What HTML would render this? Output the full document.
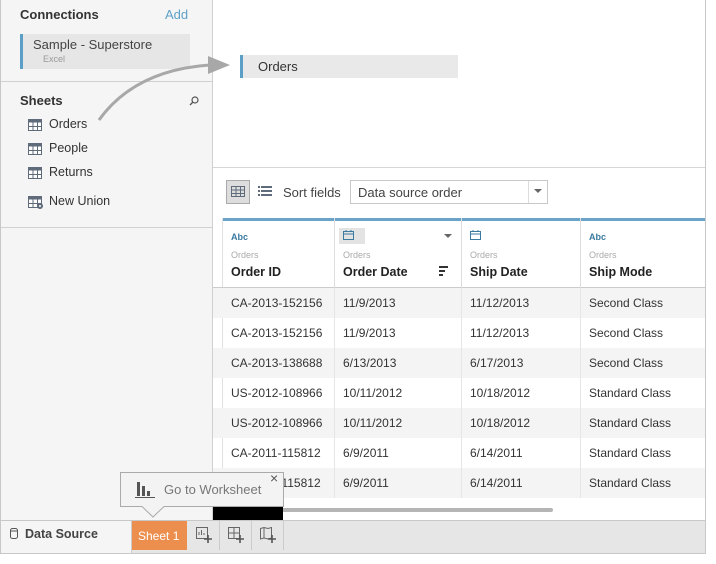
<!DOCTYPE html>
<html><head><meta charset="utf-8"><style>
*{box-sizing:border-box;margin:0;padding:0}
body{width:716px;height:564px;background:#fff;font-family:"Liberation Sans",sans-serif;position:relative;overflow:hidden;color:#333}
.a{position:absolute}
.frame{left:0;top:0;width:706px;height:554px;border:1px solid #c8c8c8;border-top:none}
.left{left:1px;top:0;width:212px;height:520px;background:#f5f5f5;border-right:1px solid #d0d0d0}
.t{font-size:12.5px;white-space:nowrap}
.row{left:213px;width:492px;height:30px;font-size:12px;color:#333}
.row span{position:absolute;top:8px}
.g{background:#f4f4f4}
.vl{width:1px;background:#e6e6e6}
</style></head><body>
<div class="a frame"></div>
<div class="a left"></div>
<div class="a t" style="left:20px;top:7px;font-weight:bold;font-size:13px;color:#333">Connections</div>
<div class="a t" style="left:165px;top:7px;font-size:13px;color:#5fa0c8">Add</div>
<div class="a" style="left:20px;top:34px;width:170px;height:35px;background:#e6e6e6;border-left:3px solid #5b9ec6"></div>
<div class="a t" style="left:33px;top:37px;font-size:13px;color:#444">Sample - Superstore</div>
<div class="a t" style="left:43px;top:54px;font-size:9px;color:#999">Excel</div>
<div class="a" style="left:1px;top:81px;width:211px;height:1px;background:#d0d0d0"></div>
<div class="a t" style="left:20px;top:93px;font-weight:bold;font-size:13px">Sheets</div>
<svg class="a" style="left:188px;top:95px" width="12" height="12"><circle cx="7" cy="5" r="3" fill="none" stroke="#555" stroke-width="1.2"/><line x1="5" y1="7" x2="2" y2="10" stroke="#555" stroke-width="1.3"/></svg>
<svg class="a" width="0" height="0"><defs><g id="tb"><rect x="0.5" y="0.5" width="13" height="11" fill="#fff" stroke="#5f6b7a"/><rect x="0.5" y="0.5" width="13" height="3" fill="#5f6b7a"/><line x1="5" y1="3" x2="5" y2="12" stroke="#5f6b7a"/><line x1="9.5" y1="3" x2="9.5" y2="12" stroke="#5f6b7a"/><line x1="0" y1="7.5" x2="14" y2="7.5" stroke="#5f6b7a"/></g></defs></svg>
<svg class="a" style="left:28px;top:119px" width="14" height="12"><use href="#tb"/></svg>
<svg class="a" style="left:28px;top:143px" width="14" height="12"><use href="#tb"/></svg>
<svg class="a" style="left:28px;top:167px" width="14" height="12"><use href="#tb"/></svg>
<svg class="a" style="left:28px;top:196px" width="16" height="14"><use href="#tb"/><circle cx="12" cy="10" r="3" fill="#5f6b7a"/><circle cx="12" cy="10" r="1" fill="#fff"/></svg>
<div class="a t" style="left:49px;top:117px;color:#333">Orders</div>
<div class="a t" style="left:49px;top:141px">People</div>
<div class="a t" style="left:49px;top:165px">Returns</div>
<div class="a t" style="left:49px;top:194px">New Union</div>
<div class="a" style="left:1px;top:227px;width:211px;height:1px;background:#d0d0d0"></div>
<svg class="a" style="left:95px;top:50px" width="140" height="75"><path d="M4 70 Q40 20 115 15" fill="none" stroke="#a8a8a8" stroke-width="3"/><path d="M113 6 L135 15 L113 24 Z" fill="#a8a8a8"/></svg>
<div class="a" style="left:240px;top:55px;width:218px;height:23px;background:#e9e9e9;border-left:3px solid #5b9ec6"></div>
<div class="a t" style="left:258px;top:59px;font-size:13px">Orders</div>
<div class="a" style="left:213px;top:167px;width:492px;height:1px;background:#d6d6d6"></div>
<div class="a" style="left:226px;top:180px;width:24px;height:24px;background:#ddd;border:1px solid #aaa"></div>
<svg class="a" style="left:231px;top:186px" width="14" height="12"><rect x="0.5" y="0.5" width="13" height="10" fill="none" stroke="#5f6b7a"/><line x1="5" y1="0" x2="5" y2="11" stroke="#5f6b7a"/><line x1="9.5" y1="0" x2="9.5" y2="11" stroke="#5f6b7a"/><line x1="0" y1="4" x2="14" y2="4" stroke="#5f6b7a"/><line x1="0" y1="7.5" x2="14" y2="7.5" stroke="#5f6b7a"/></svg>
<svg class="a" style="left:258px;top:186px" width="14" height="12"><g fill="#5f6b7a"><rect x="0" y="0" width="2" height="2"/><rect x="3" y="0" width="11" height="2"/><rect x="0" y="4" width="2" height="2"/><rect x="3" y="4" width="11" height="2"/><rect x="0" y="8" width="2" height="2"/><rect x="3" y="8" width="11" height="2"/></g></svg>
<div class="a t" style="left:283px;top:185px;font-size:13px;color:#444">Sort fields</div>
<div class="a" style="left:350px;top:180px;width:198px;height:24px;border:1px solid #c8c8c8;background:#fff"></div>
<div class="a" style="left:528px;top:181px;width:1px;height:22px;background:#ddd"></div>
<div class="a t" style="left:358px;top:185px;font-size:13px;color:#444">Data source order</div>
<svg class="a" style="left:534px;top:189px" width="9" height="5"><path d="M0 0H8L4 4Z" fill="#666"/></svg>
<!-- header -->
<div class="a" style="left:223px;top:218px;width:482px;height:3px;background:#6aa5c9"></div>
<div class="a" style="left:222px;top:218px;width:1px;height:280px;background:#e0e0e0"></div>
<div class="a" style="left:213px;top:287px;width:492px;height:1px;background:#ccc"></div>
<div class="a vl" style="left:334px;top:218px;height:70px;background:#ddd"></div>
<div class="a vl" style="left:461px;top:218px;height:70px;background:#ddd"></div>
<div class="a vl" style="left:580px;top:218px;height:70px;background:#ddd"></div>
<div class="a" style="left:339px;top:228px;width:26px;height:16px;background:#e3e3e3"></div>
<div class="a t" style="left:231px;top:232px;font-size:9px;font-weight:bold;color:#3a7aa0">Abc</div>
<div class="a t" style="left:589px;top:232px;font-size:9px;font-weight:bold;color:#3a7aa0">Abc</div>
<svg class="a" style="left:343px;top:230px" width="11" height="10"><rect x="0.5" y="1.5" width="10" height="8" fill="none" stroke="#3a7aa0"/><line x1="0" y1="4" x2="11" y2="4" stroke="#3a7aa0"/><line x1="3" y1="0" x2="3" y2="2" stroke="#3a7aa0"/><line x1="8" y1="0" x2="8" y2="2" stroke="#3a7aa0"/></svg>
<svg class="a" style="left:470px;top:230px" width="11" height="10"><rect x="0.5" y="1.5" width="10" height="8" fill="none" stroke="#3a7aa0"/><line x1="0" y1="4" x2="11" y2="4" stroke="#3a7aa0"/><line x1="3" y1="0" x2="3" y2="2" stroke="#3a7aa0"/><line x1="8" y1="0" x2="8" y2="2" stroke="#3a7aa0"/></svg>
<svg class="a" style="left:444px;top:234px" width="9" height="5"><path d="M0 0H8L4 4Z" fill="#666"/></svg>
<svg class="a" style="left:439px;top:266px" width="10" height="10"><g fill="#333"><rect x="0" y="0" width="9" height="2"/><rect x="0" y="4" width="6" height="2"/><rect x="0" y="8" width="4" height="2"/></g></svg>
<div class="a t" style="left:231px;top:250px;font-size:9px;color:#aaa">Orders</div>
<div class="a t" style="left:343px;top:250px;font-size:9px;color:#aaa">Orders</div>
<div class="a t" style="left:470px;top:250px;font-size:9px;color:#aaa">Orders</div>
<div class="a t" style="left:589px;top:250px;font-size:9px;color:#aaa">Orders</div>
<div class="a t" style="left:231px;top:265px;font-weight:bold;font-size:12.5px;color:#222">Order ID</div>
<div class="a t" style="left:343px;top:265px;font-weight:bold;font-size:12.5px;color:#222">Order Date</div>
<div class="a t" style="left:470px;top:265px;font-weight:bold;font-size:12.5px;color:#222">Ship Date</div>
<div class="a t" style="left:589px;top:265px;font-weight:bold;font-size:12.5px;color:#222">Ship Mode</div>
<!-- rows -->
<div class="a row g" style="top:288px"><span style="left:18px">CA-2013-152156</span><span style="left:130px">11/9/2013</span><span style="left:257px">11/12/2013</span><span style="left:376px">Second Class</span></div>
<div class="a row" style="top:318px"><span style="left:18px">CA-2013-152156</span><span style="left:130px">11/9/2013</span><span style="left:257px">11/12/2013</span><span style="left:376px">Second Class</span></div>
<div class="a row g" style="top:348px"><span style="left:18px">CA-2013-138688</span><span style="left:130px">6/13/2013</span><span style="left:257px">6/17/2013</span><span style="left:376px">Second Class</span></div>
<div class="a row" style="top:378px"><span style="left:18px">US-2012-108966</span><span style="left:130px">10/11/2012</span><span style="left:257px">10/18/2012</span><span style="left:376px">Standard Class</span></div>
<div class="a row g" style="top:408px"><span style="left:18px">US-2012-108966</span><span style="left:130px">10/11/2012</span><span style="left:257px">10/18/2012</span><span style="left:376px">Standard Class</span></div>
<div class="a row" style="top:438px"><span style="left:18px">CA-2011-115812</span><span style="left:130px">6/9/2011</span><span style="left:257px">6/14/2011</span><span style="left:376px">Standard Class</span></div>
<div class="a row g" style="top:468px"><span style="left:18px">CA-2011-115812</span><span style="left:130px">6/9/2011</span><span style="left:257px">6/14/2011</span><span style="left:376px">Standard Class</span></div>
<div class="a vl" style="left:334px;top:288px;height:210px"></div>
<div class="a vl" style="left:461px;top:288px;height:210px"></div>
<div class="a vl" style="left:580px;top:288px;height:210px"></div>
<div class="a" style="left:213px;top:498px;width:492px;height:22px;background:#fff"></div>
<div class="a" style="left:213px;top:508px;width:340px;height:4px;background:#b5b5b5;border-radius:2px"></div>
<div class="a" style="left:213px;top:500px;width:70px;height:20px;background:#000"></div>
<!-- tab bar -->
<div class="a" style="left:1px;top:520px;width:704px;height:33px;background:#e6e6e6;border-top:1px solid #c8c8c8"></div>
<div class="a" style="left:1px;top:521px;width:131px;height:32px;background:#f5f5f5;border-right:1px solid #ccc"></div>
<svg class="a" style="left:10px;top:528px" width="9" height="12"><rect x="0.5" y="0.5" width="7" height="10" rx="2" fill="none" stroke="#555"/><line x1="0" y1="3" x2="8" y2="3" stroke="#555"/></svg>
<div class="a t" style="left:25px;top:527px;font-weight:bold;font-size:12.5px;color:#444">Data Source</div>
<div class="a" style="left:132px;top:521px;width:55px;height:29px;background:#ec8f4e"></div>
<div class="a t" style="left:138px;top:529px;font-size:12px;color:#fff">Sheet 1</div>
<div class="a" style="left:219px;top:521px;width:1px;height:29px;background:#ccc"></div>
<div class="a" style="left:251px;top:521px;width:1px;height:29px;background:#ccc"></div>
<div class="a" style="left:283px;top:521px;width:1px;height:29px;background:#ccc"></div>
<svg class="a" style="left:196px;top:527px" width="16" height="16"><rect x="0.5" y="0.5" width="11" height="11" fill="none" stroke="#666"/><path d="M3 8V5M5.5 8V3M8 8V6" stroke="#666"/><path d="M12 8V16M8 12H16" stroke="#555" stroke-width="1.6"/></svg>
<svg class="a" style="left:228px;top:527px" width="16" height="16"><rect x="0.5" y="0.5" width="11" height="11" fill="none" stroke="#666"/><path d="M6 0V12M0 6H12" stroke="#666"/><path d="M12 8V16M8 12H16" stroke="#555" stroke-width="1.6"/></svg>
<svg class="a" style="left:260px;top:527px" width="16" height="16"><path d="M0.5 1.5L4 0.5L8 1.5L11.5 0.5V11L8 12L4 11L0.5 12Z" fill="none" stroke="#666"/><path d="M4 0.5V11" stroke="#666"/><path d="M12 8V16M8 12H16" stroke="#555" stroke-width="1.6"/></svg>
<!-- tooltip -->
<svg class="a" style="left:119px;top:471px" width="166" height="55"><path d="M1.5 1.5H164.5V35.5H45L34 46L23 35.5H1.5Z" fill="#f3f3f3" stroke="#aaa"/></svg>
<svg class="a" style="left:135px;top:480px" width="20" height="18"><g fill="#555"><rect x="2" y="2" width="3" height="14"/><rect x="7" y="6" width="3" height="10"/><rect x="12" y="11" width="3" height="5"/><rect x="0" y="17" width="20" height="1"/></g></svg>
<div class="a t" style="left:164px;top:482px;font-size:13px;color:#777">Go to Worksheet</div>
<div class="a t" style="left:270px;top:470px;font-size:14px;color:#555">×</div>
</body></html>
